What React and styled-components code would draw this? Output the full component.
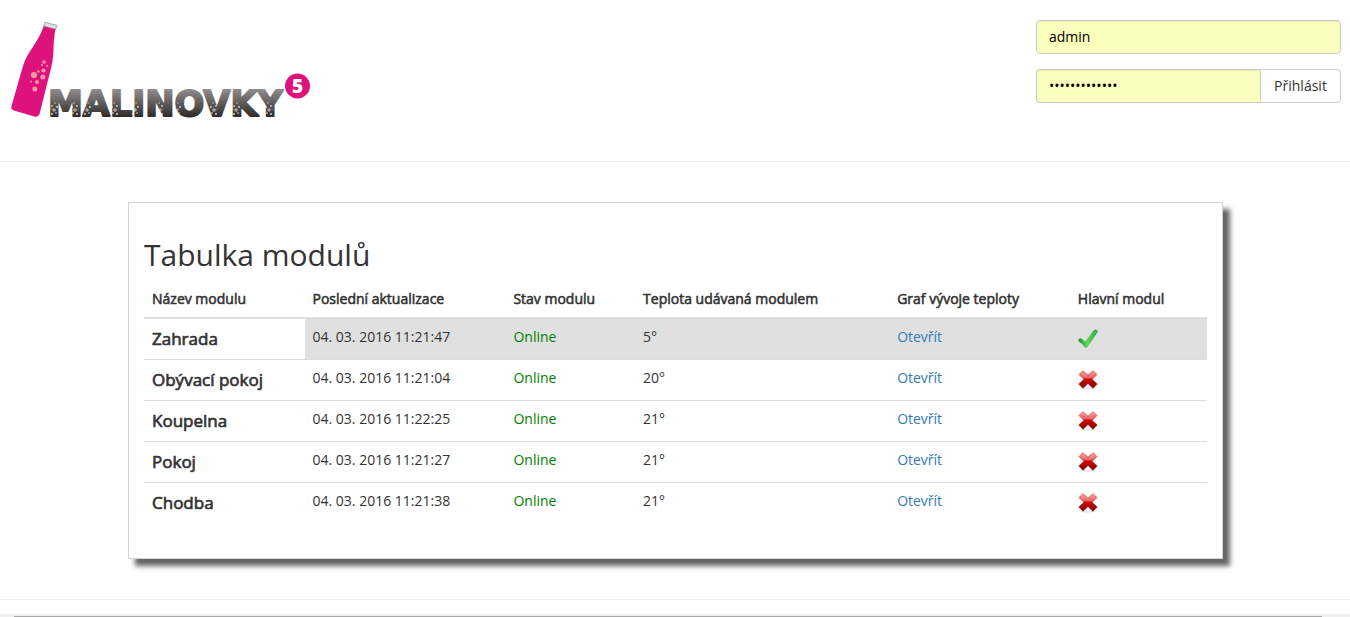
import React from "react";
import styled, { createGlobalStyle, css } from "styled-components";

const GlobalStyle = createGlobalStyle`
  *, *::before, *::after { box-sizing: border-box; }
  body {
    margin: 0;
    background: #fff;
    color: #333;
    font-family: "Open Sans", "Liberation Sans", sans-serif;
    font-size: 14px;
    line-height: 20px;
  }
`;

/* Regular letters thickened by a thin outline, keeping their regular widths */
const heavy = css`
  font-weight: 400;
  -webkit-text-stroke: 0.04em currentColor;
`;

const Header = styled.header`
  display: flex;
  justify-content: space-between;
  align-items: flex-start;
  padding: 20px 9px 38px 10px;
  border-bottom: 1px solid #eee;
`;

const LogoLink = styled.a`
  display: block;
  line-height: 0;
`;

const LoginForm = styled.form`
  display: flex;
  flex-direction: column;
  gap: 15px;
  width: 305px;
`;

const InputGroup = styled.div`
  display: flex;
`;

const TextInput = styled.input`
  flex: 1;
  min-width: 0;
  height: 34px;
  padding: 5px 12px 7px;
  border: 1px solid #ccc;
  border-radius: ${(p) => (p.$joined ? "4px 0 0 4px" : "4px")};
  ${(p) => p.$joined && "border-right: 0;"}
  background: #faffbd;
  box-shadow: inset 0 1px 1px rgba(0, 0, 0, 0.075);
  color: #000;
  font: inherit;
  outline: none;
`;

const LoginButton = styled.button`
  min-width: 81px;
  height: 34px;
  padding: 6px 12px;
  border: 1px solid #ccc;
  border-radius: 0 4px 4px 0;
  background: #fff;
  color: #333;
  font: inherit;
  cursor: pointer;
`;

const Panel = styled.main`
  margin: 40px 127px 40px 128px;
  padding: 15px;
  border: 1px solid #d3d3d3;
  background: #fff;
  box-shadow: 7px 7px 5px #656565;
`;

const Title = styled.h2`
  margin: 20px 0 10px;
  font-size: 30px;
  font-weight: 400;
  line-height: 33px;
`;

const ModuleTable = styled.table`
  width: 100%;
  margin-bottom: 20px;
  border-collapse: collapse;
`;

const Column = styled.col`
  width: ${(p) => p.$share}%;
`;

const HeadCell = styled.th`
  ${heavy}
  padding: 8px;
  border-bottom: 2px solid #ddd;
  text-align: left;
`;

const NameCell = styled.th`
  ${heavy}
  padding: 8px;
  border-top: 1px solid #ddd;
  font-size: 17px;
  line-height: 24px;
  text-align: left;
`;

const Cell = styled.td`
  padding: 8px;
  border-top: 1px solid #ddd;
  background: ${(p) => (p.$main ? "#e0e0e0" : "transparent")};
  vertical-align: ${(p) => (p.$icon ? "middle" : "top")};
`;

const Status = styled.span`
  color: #008000;
`;

const OpenLink = styled.a`
  color: #337ab7;
  text-decoration: none;
`;

const StateIcon = styled.svg`
  display: block;
  width: 20px;
  height: 20px;
`;

const Footer = styled.footer`
  padding-top: 14px;
  border-top: 1px solid #eee;
`;

const FooterTrack = styled.div`
  padding: 2px 28px 0 14px;
  background: #f0f0f0;
`;

const FooterThumb = styled.div`
  height: 1px;
  background: #a8a8a8;
`;

const bottleBubbles = [
  [44, 62, 1.8], [42, 65, 1], [47, 66, 1], [43.5, 70.5, 2.1], [38.5, 71.5, 1.2],
  [34, 75, 3.1], [42.8, 77, 2.5], [31, 81.5, 1], [37, 82, 2], [34.8, 89, 2.5],
];

/* Foam clusters: centre of each one along the word */
const foamCentres = [54, 75, 87, 115, 135, 160, 177, 214, 236, 269];
const foam = [
  [0, 110, 1.8], [3, 107, 1], [-2, 106, 0.9], [2, 113, 1], [-2, 114, 1.1],
  [1, 103, 0.7], [-3, 109, 0.6],
];

function Logo() {
  return (
    <svg width="304" height="103" viewBox="10 20 304 103" role="img" aria-label="Malinovky 5">
      <defs>
        <linearGradient id="letters" gradientUnits="userSpaceOnUse" x1="0" y1="88" x2="0" y2="118">
          <stop offset="0" stopColor="#949291" />
          <stop offset="1" stopColor="#2b2624" />
        </linearGradient>
      </defs>
      <path d="M45 23 L58 26 L57 30 C54 46 56 57 52 70 L40 115 Q38 119 34 117 L13 111 Z" fill="#000" opacity="0.05" />
      <path
        d="M43.8 26 L55.5 29 C52.500 43 54.500 54 51.5 66 L39.5 114 Q38 117.5 34.5 116.5 L14 110.500 Q10.500 109.500 11.500 106 L23 66 C27 52 38 43 43.800 26 Z"
        fill="#de127c"
      />
      <path d="M44.800 22.300 L56.800 25.300 L55.500 29.200 L43.600 26 Z" fill="#e3e1e3" stroke="#77717a" strokeWidth="0.6" />
      {bottleBubbles.map(([x, y, r]) => (
        <circle key={`${x}-${y}`} cx={x} cy={y} r={r} fill="#f29aa0" />
      ))}
      <text
        x="48"
        y="116"
        fontFamily="DejaVu Sans, sans-serif"
        fontSize="35"
        fontWeight="700"
        fill="url(#letters)"
        stroke="url(#letters)"
        strokeWidth="2"
        strokeLinejoin="round"
      >
        MALINOVKY
      </text>
      {foamCentres.map((centre, i) => (
        <g key={centre} fill="#fff">
          {foam.map(([x, y, r], j) => (
            <circle key={j} cx={centre + (i % 2 ? -x : x)} cy={y} r={r} opacity={j % 3 ? 0.7 : 0.5} />
          ))}
        </g>
      ))}
      <circle cx="297.500" cy="86" r="12.500" fill="#de127c" />
      <text x="297.500" y="93" textAnchor="middle" fontFamily="Open Sans, sans-serif" fontSize="19" fontWeight="800" fill="#fff">
        5
      </text>
    </svg>
  );
}

function CheckIcon() {
  return (
    <StateIcon viewBox="0 0 20 20" role="img" aria-label="Ano">
      <defs>
        <linearGradient id="check" x1="0" y1="0" x2="1" y2="0">
          <stop offset="0" stopColor="#17912b" />
          <stop offset="0.45" stopColor="#5fda58" />
          <stop offset="1" stopColor="#35a34b" />
        </linearGradient>
      </defs>
      <path
        d="M.5 11 Q.5 9 2.500 9.300 Q5 10 7 12.800 L15.500 1.500 Q17 -.2 19 1.200 Q20.300 2 19.300 3.800 L9.500 18 Q8 20 6.500 18 Q4 14.500 1.500 13 Q.3 12.200 .5 11 Z"
        fill="url(#check)"
      />
    </StateIcon>
  );
}

function CrossIcon() {
  return (
    <StateIcon viewBox="0 0 20 20" role="img" aria-label="Ne">
      <defs>
        <linearGradient id="cross" x1="0" y1="0" x2="0" y2="1">
          <stop offset="0" stopColor="#f58f8f" />
          <stop offset="0.4" stopColor="#e34444" />
          <stop offset="0.5" stopColor="#cc0b0b" />
          <stop offset="1" stopColor="#7d0000" />
        </linearGradient>
      </defs>
      <ellipse cx="10" cy="18.500" rx="8" ry="1" fill="#000" opacity="0.1" />
      <path
        d="M5 .4 L10 5 L15 .4 L19.200 4.500 L14 9.200 L19.200 14 L15 18.300 L10 13.500 L5 18.300 L.8 14 L6 9.200 L.8 4.500 Z"
        fill="url(#cross)"
        stroke="url(#cross)"
        strokeWidth="0.6"
        strokeLinejoin="round"
      />
      <path d="M5 1.500 L10 6 L15 1.500 L17.500 4.500 L14 8 Q9 8.500 5 7.500 L2.500 4.500 Z" fill="#fff" opacity="0.2" />
    </StateIcon>
  );
}

const columns = [
  { label: "Název modulu", share: 15.1 },
  { label: "Poslední aktualizace", share: 18.9 },
  { label: "Stav modulu", share: 12.2 },
  { label: "Teplota udávaná modulem", share: 23.9 },
  { label: "Graf vývoje teploty", share: 17 },
  { label: "Hlavní modul", share: 12.9 },
];

const modules = [
  { name: "Zahrada", updated: "04. 03. 2016 11:21:47", temperature: "5°", main: true },
  { name: "Obývací pokoj", updated: "04. 03. 2016 11:21:04", temperature: "20°" },
  { name: "Koupelna", updated: "04. 03. 2016 11:22:25", temperature: "21°" },
  { name: "Pokoj", updated: "04. 03. 2016 11:21:27", temperature: "21°" },
  { name: "Chodba", updated: "04. 03. 2016 11:21:38", temperature: "21°" },
];

export default function App() {
  return (
    <>
      <GlobalStyle />
      <Header>
        <LogoLink href="#">
          <Logo />
        </LogoLink>
        <LoginForm onSubmit={(e) => e.preventDefault()}>
          <InputGroup>
            <TextInput type="text" aria-label="Jméno" defaultValue="admin" />
          </InputGroup>
          <InputGroup>
            <TextInput $joined type="password" aria-label="Heslo" defaultValue="malinovkypet5" />
            <LoginButton type="submit">Přihlásit</LoginButton>
          </InputGroup>
        </LoginForm>
      </Header>
      <Panel>
        <Title>Tabulka modulů</Title>
        <ModuleTable>
          <colgroup>
            {columns.map((c) => (
              <Column key={c.label} $share={c.share} />
            ))}
          </colgroup>
          <thead>
            <tr>
              {columns.map((c) => (
                <HeadCell key={c.label} scope="col">{c.label}</HeadCell>
              ))}
            </tr>
          </thead>
          <tbody>
            {modules.map((m) => (
              <tr key={m.name}>
                <NameCell scope="row">{m.name}</NameCell>
                <Cell $main={m.main}>{m.updated}</Cell>
                <Cell $main={m.main}><Status>Online</Status></Cell>
                <Cell $main={m.main}>{m.temperature}</Cell>
                <Cell $main={m.main}><OpenLink href="#">Otevřít</OpenLink></Cell>
                <Cell $main={m.main} $icon>{m.main ? <CheckIcon /> : <CrossIcon />}</Cell>
              </tr>
            ))}
          </tbody>
        </ModuleTable>
      </Panel>
      <Footer>
        <FooterTrack>
          <FooterThumb />
        </FooterTrack>
      </Footer>
    </>
  );
}
